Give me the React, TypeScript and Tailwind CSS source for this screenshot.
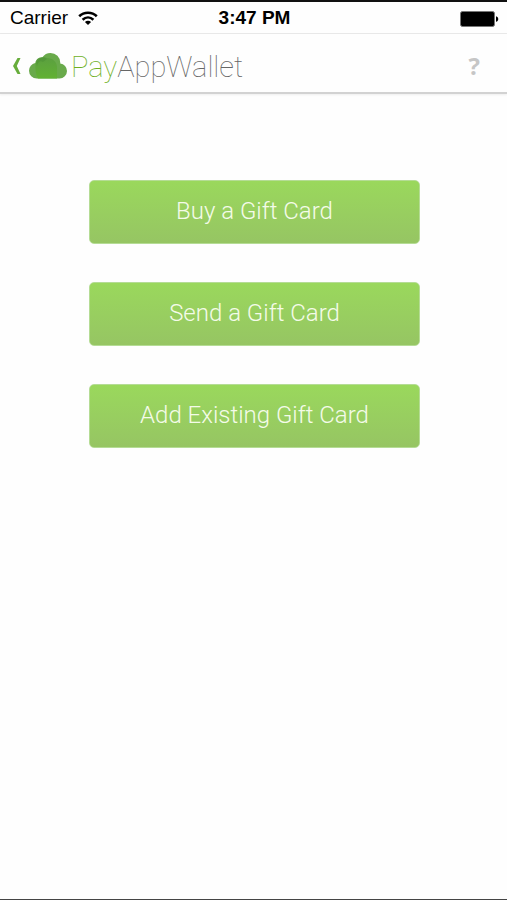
const actions = ["Buy a Gift Card", "Send a Gift Card", "Add Existing Gift Card"];

function WifiIcon() {
  return (
    <svg viewBox="0 0 20 15" className="h-[15px] w-5" fill="none" stroke="#000" strokeWidth="2.6" aria-hidden="true">
      <path d="M1.2 5.2C6 .6 14 .6 18.8 5.2" />
      <path d="M4.6 8.7C7.8 5.8 12.2 5.8 15.4 8.7" />
      <path d="M10 14 6.9 10.9C8.6 9.3 11.4 9.3 13.1 10.9Z" fill="#000" stroke="none" />
    </svg>
  );
}

function BatteryIcon() {
  return (
    <svg viewBox="0 0 39 16" className="h-4 w-[39px]" aria-hidden="true">
      <rect x="0.5" y="0.5" width="34" height="15" rx="2" fill="#000" stroke="#777" />
      <path d="M36 5.2c3 .6 3 5 0 5.6z" fill="#000" />
    </svg>
  );
}

function CloudLogo() {
  return (
    <svg viewBox="0 0 38 26" className="h-[26px] w-[38px]" aria-hidden="true">
      <defs>
        <linearGradient id="cloud" x1="0" y1="0" x2="0" y2="1">
          <stop offset="0" stopColor="#5b9f40" />
          <stop offset="1" stopColor="#62b232" />
        </linearGradient>
        <clipPath id="cloud-shape">
          <circle cx="7.8" cy="17.7" r="7.8" />
          <circle cx="12.5" cy="10.5" r="6.3" />
          <circle cx="21.5" cy="9.8" r="9.8" />
          <circle cx="30.5" cy="18" r="7.5" />
          <rect x="7.8" y="10" width="22.7" height="15.5" />
        </clipPath>
      </defs>
      <g clipPath="url(#cloud-shape)">
        <rect width="38" height="26" fill="#69aa4b" />
        <path d="M6.5 11C9 5 14 3 18 5C24 5 28 9 28 14V26H9C6.5 21 6 15 6.5 11Z" fill="url(#cloud)" />
        <path d="M7 9C8 4 14 3 18 6L14 9C11 7 9 9 8 13Z" fill="#468c31" opacity=".4" />
      </g>
    </svg>
  );
}

export default function App() {
  return (
    <div className="flex min-h-screen flex-col border-t-2 border-b border-t-[#111] border-b-[#444] bg-[#fefefe] font-['Roboto',sans-serif]">
      <div className="grid h-8 grid-cols-3 items-center border-b border-[#e8e8e8] pt-[2px] pr-2 pl-[10px] font-['Liberation_Sans',sans-serif] text-[19px] text-black">
        <div className="flex items-center gap-[10px]">
          <span>Carrier</span>
          <WifiIcon />
        </div>
        <span className="text-center font-bold">3:47 PM</span>
        <div className="flex justify-end">
          <BatteryIcon />
        </div>
      </div>

      <header className="flex h-[60px] items-center justify-between border-b-2 border-[#d2d2d2] pt-1.5 pr-[27px] pl-3 shadow-[0_1px_2px_#eeeeee]">
        <div className="flex items-center">
          <button type="button" aria-label="Back" className="mr-2">
            <svg viewBox="0 0 9 16" className="h-4 w-[9px]" aria-hidden="true">
              <path d="M5.5 0H8.5L4.8 8L8.5 16H5.5L1 8Z" fill="#67ad3b" />
            </svg>
          </button>
          <a href="#" className="flex items-center gap-1">
            <CloudLogo />
            <span className="pt-[2px] text-[29px] leading-8 font-thin text-[#666]">
              <span className="text-[#6fb01f]">Pay</span>AppWallet
            </span>
          </a>
        </div>
        <button type="button" aria-label="Help" className="font-['Open_Sans',sans-serif] text-2xl font-bold text-[#c6c6c6]">
          ?
        </button>
      </header>

      <main className="flex flex-col gap-[38px] pt-[86px] pr-[87px] pl-[89px]">
        {actions.map((label) => (
          <button
            key={label}
            type="button"
            className="h-16 w-full rounded-[5px] border border-[#b5dc95] bg-linear-to-b from-[#9ad85c] to-[#96c563] pb-[2px] text-2xl font-light text-[#f4fbe9]"
          >
            {label}
          </button>
        ))}
      </main>
    </div>
  );
}
